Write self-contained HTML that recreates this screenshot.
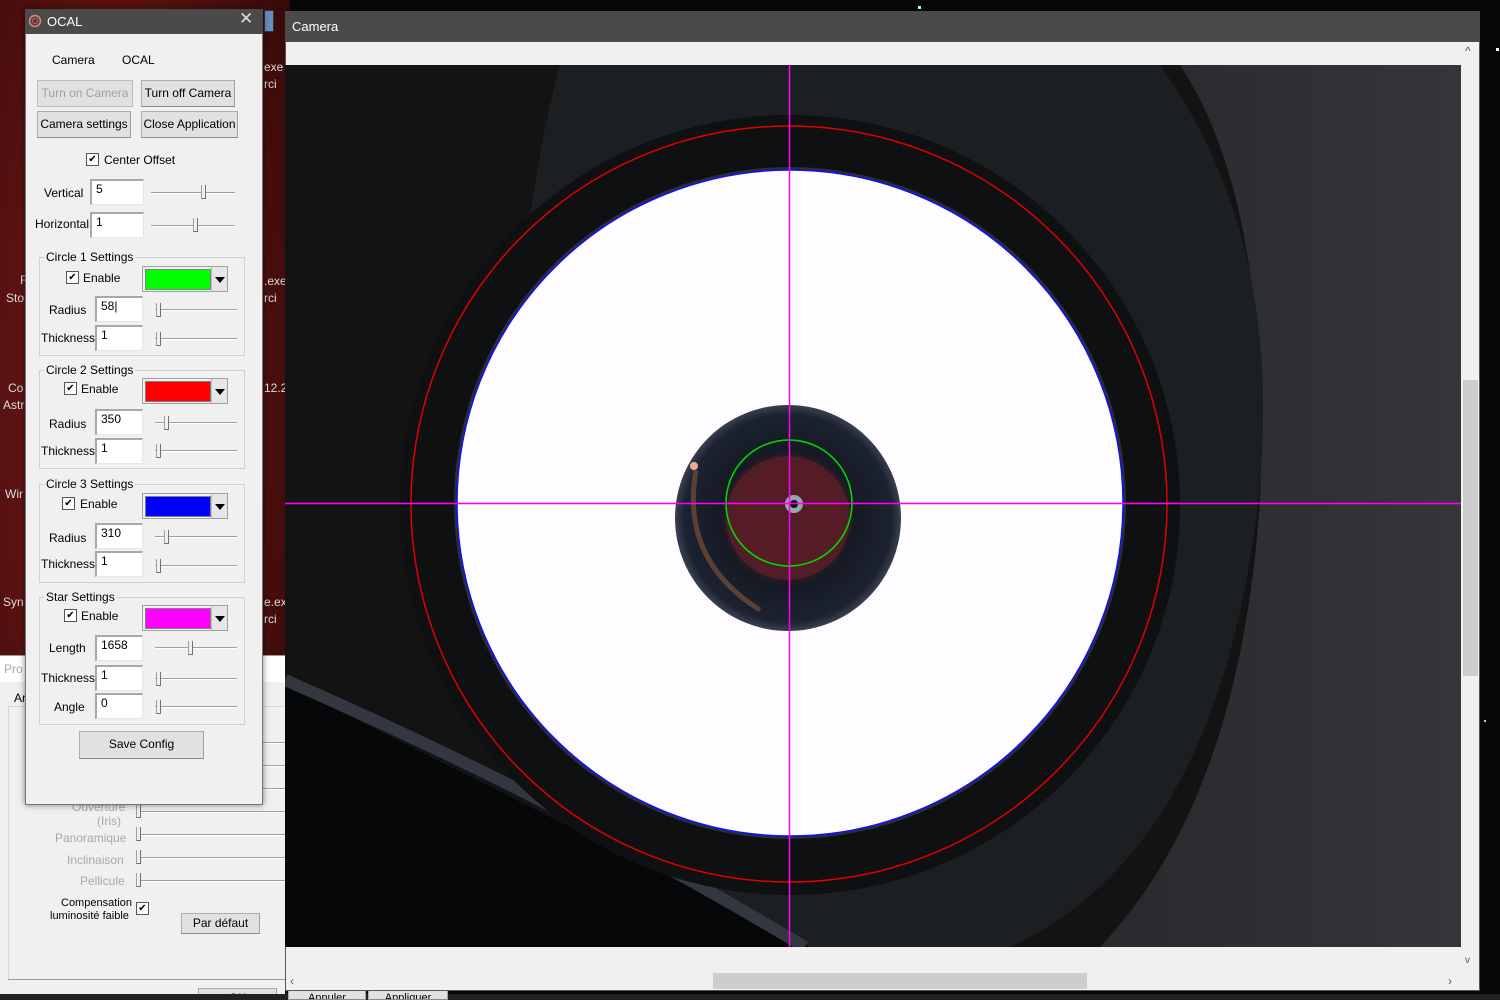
<!DOCTYPE html>
<html><head><meta charset="utf-8">
<style>
*{box-sizing:border-box;margin:0;padding:0}
html,body{width:1500px;height:1000px;overflow:hidden}
body{position:relative;background:#050608;font-family:"Liberation Sans",sans-serif;font-size:12px;color:#000}
.a{position:absolute}
.lbl{position:absolute;font-size:12px;line-height:14px;white-space:nowrap}
.btn{position:absolute;background:#e1e1e1;border:1px solid #adadad;border-right-color:#a0a0a0;border-bottom-color:#8a8a8a;text-align:center;line-height:24px;font-size:12px;white-space:nowrap;overflow:hidden}
.inp{position:absolute;background:#fff;border-top:2px solid #a8a8a8;border-left:2px solid #a8a8a8;border-right:1px solid #e6e6e6;border-bottom:1px solid #e6e6e6;padding:1px 0 0 4px;font-size:12px;line-height:14px}
.cb{position:absolute;width:13px;height:13px;background:#fff;border:1px solid #555;font-size:10px;line-height:11px;text-align:center}
.trk{position:absolute;height:2px;border-top:1px solid #a0a0a0;border-bottom:1px solid #fff}
.thm{position:absolute;width:5px;height:14px;background:#f0f0f0;border:1px solid #a0a0a0;border-right-color:#707070;border-bottom-color:#707070;border-top:none}
.grp{position:absolute;border:1px solid #d0d0d0;left:39px;width:206px}
.gt{position:absolute;background:#f0f0f0;padding:0 2px;left:4px;top:-8px;font-size:12px;line-height:14px}
.combo{position:absolute;left:142px;width:86px;height:26px;border:1px solid #a0a0a0;background:#f0f0f0}
.sw{position:absolute;left:2px;top:2px;width:66px;height:21px;border:1px solid #808080}
.arr{position:absolute;right:0;top:0;width:16px;height:24px;background:#e6e6e6;border-left:1px solid #c0c0c0}
.arr:after{content:"";position:absolute;left:3px;top:10px;border-left:5px solid transparent;border-right:5px solid transparent;border-top:6px solid #000}
.gray{color:#a8a8a8}
</style></head><body>

<div class="a" style="left:0;top:0;width:290px;height:1000px;background:radial-gradient(ellipse at 40% 40%,#7a1a1a 0%,#5a1212 45%,#3a0a0a 80%,#200505 100%)"></div>
<div class="a" style="left:264px;top:10px;width:10px;height:22px;background:#6a8cbf;border:1px solid #333"></div>
<div class="lbl" style="left:264px;top:60px;color:#ddd">exe</div>
<div class="lbl" style="left:264px;top:77px;color:#ddd">rci</div>
<div class="lbl" style="left:264px;top:274px;color:#ddd">.exe</div>
<div class="lbl" style="left:264px;top:291px;color:#ddd">rci</div>
<div class="lbl" style="left:264px;top:381px;color:#ddd">12.2</div>
<div class="lbl" style="left:264px;top:595px;color:#ddd">e.exe</div>
<div class="lbl" style="left:264px;top:612px;color:#ddd">rci</div>
<div class="lbl" style="left:20px;top:273px;color:#ddd">F</div>
<div class="lbl" style="left:6px;top:291px;color:#ddd">Sto</div>
<div class="lbl" style="left:8px;top:381px;color:#ddd">Co</div>
<div class="lbl" style="left:3px;top:398px;color:#ddd">Astr</div>
<div class="lbl" style="left:5px;top:487px;color:#ddd">Wir</div>
<div class="lbl" style="left:3px;top:595px;color:#ddd">Syn</div>

<div class="a" style="left:0;top:655px;width:285px;height:345px;background:#f0f0f0;border-top:1px solid #999"></div>
<div class="a" style="left:0;top:656px;width:285px;height:26px;background:#fff"></div>
<div class="lbl gray" style="left:4px;top:662px">Pro</div>
<div class="lbl" style="left:14px;top:691px">Ar</div>
<div class="a" style="left:8px;top:706px;width:280px;height:274px;border:1px solid #d8d8d8;background:#f0f0f0"></div>
<div class="trk" style="left:263px;top:742px;width:22px"></div>
<div class="trk" style="left:263px;top:765px;width:22px"></div>
<div class="trk" style="left:263px;top:788px;width:22px"></div>
<div class="lbl gray" style="left:72px;top:800px">Ouverture</div>
<div class="lbl gray" style="left:97px;top:814px">(Iris)</div>
<div class="trk" style="left:140px;top:811px;width:145px"></div><div class="thm" style="left:136px;top:804px"></div>
<div class="lbl gray" style="left:55px;top:831px">Panoramique</div>
<div class="trk" style="left:140px;top:834px;width:145px"></div><div class="thm" style="left:136px;top:827px"></div>
<div class="lbl gray" style="left:67px;top:853px">Inclinaison</div>
<div class="trk" style="left:140px;top:857px;width:145px"></div><div class="thm" style="left:136px;top:850px"></div>
<div class="lbl gray" style="left:80px;top:874px">Pellicule</div>
<div class="trk" style="left:140px;top:880px;width:145px"></div><div class="thm" style="left:136px;top:873px"></div>
<div class="lbl" style="left:61px;top:896px;font-size:11px">Compensation</div>
<div class="lbl" style="left:50px;top:909px;font-size:11px">luminosité faible</div>
<div class="cb" style="left:136px;top:902px">✔</div>
<div class="btn" style="left:181px;top:913px;width:79px;height:21px;line-height:19px">Par défaut</div>
<div class="a" style="left:8px;top:979px;width:280px;height:1px;background:#999"></div>
<div class="btn" style="left:198px;top:988px;width:79px;height:12px;line-height:18px">OK</div>
<div class="a" style="left:0;top:994px;width:1500px;height:6px;background:#222"></div>
<div class="btn" style="left:288px;top:990px;width:78px;height:10px;line-height:14px;font-size:11px">Annuler</div>
<div class="btn" style="left:368px;top:990px;width:80px;height:10px;line-height:14px;font-size:11px">Appliquer</div>

<div class="a" style="left:285px;top:11px;width:1195px;height:980px;background:#f0f0f0;border:1px solid #555"></div>
<div class="a" style="left:285px;top:11px;width:1195px;height:31px;background:#4b4a48"></div>
<div class="lbl" style="left:292px;top:20px;color:#fff;font-size:13px">Camera</div>
<svg class="a" style="left:285px;top:65px" width="1176" height="882" viewBox="285 65 1176 882">
<defs>
<linearGradient id="rg" x1="0" y1="0" x2="1" y2="0">
<stop offset="0" stop-color="#27292c"/><stop offset="1" stop-color="#35363a"/>
</linearGradient>
<radialGradient id="dk" cx="0.5" cy="0.5" r="0.5">
<stop offset="0" stop-color="#3a1a22"/><stop offset="0.45" stop-color="#4a1c26"/><stop offset="0.6" stop-color="#151a24"/><stop offset="0.92" stop-color="#1c2230"/><stop offset="1" stop-color="#3a4050"/>
</radialGradient>
</defs>
<rect x="285" y="65" width="1176" height="882" fill="#141313"/>
<path d="M1180 65 L1461 65 L1461 947 L1100 947 Q1240 800 1260 500 Q1270 200 1180 65Z" fill="url(#rg)"/>
<path d="M560 65 L1160 65 Q1300 260 1250 560 Q1200 860 1010 947 L780 947 Q540 820 520 500 Q510 250 560 65Z" fill="#1c1f22"/>
<path d="M285 684 L810 947 L285 947Z" fill="#060708"/>
<path d="M285 680 Q560 800 805 947" stroke="#323740" stroke-width="12" fill="none"/>
<circle cx="790" cy="505" r="390" fill="#0e1012"/>
<circle cx="790" cy="503" r="336" fill="#2a2e33"/>
<circle cx="790" cy="503" r="333" fill="#fefcff"/>
<circle cx="788" cy="518" r="113" fill="url(#dk)"/>
<circle cx="788" cy="518" r="62" fill="#5a1e28" opacity="0.8"/>
<circle cx="794" cy="504" r="9" fill="#9aa4ac"/>
<circle cx="794" cy="504" r="4" fill="#111"/>
<path d="M696 470 Q680 560 760 610" stroke="#6a4a3a" stroke-width="5" fill="none" opacity="0.8"/>
<circle cx="694" cy="466" r="4" fill="#e8b090"/>
<circle cx="790" cy="503" r="333" fill="none" stroke="#1010ff" stroke-width="1.5"/>
<circle cx="789" cy="504" r="378" fill="none" stroke="#e00000" stroke-width="1.5"/>
<circle cx="789" cy="503" r="63" fill="none" stroke="#00dd00" stroke-width="1.5"/>
<line x1="789.5" y1="65" x2="789.5" y2="947" stroke="#ff00ff" stroke-width="1.5"/>
<line x1="285" y1="503.5" x2="1461" y2="503.5" stroke="#ff00ff" stroke-width="1.5"/>
</svg>
<div class="a" style="left:1461px;top:42px;width:18px;height:928px;background:#f0f0f0"></div>
<div class="a" style="left:1463px;top:380px;width:15px;height:296px;background:#cdcdcd"></div>
<div class="lbl" style="left:1465px;top:44px;color:#555;font-size:12px">^</div>
<div class="lbl" style="left:1465px;top:954px;color:#555;font-size:10px">v</div>
<div class="a" style="left:286px;top:971px;width:1175px;height:19px;background:#f0f0f0"></div>
<div class="a" style="left:713px;top:973px;width:374px;height:16px;background:#cdcdcd"></div>
<div class="lbl" style="left:290px;top:974px;color:#555">‹</div>
<div class="lbl" style="left:1448px;top:974px;color:#555">›</div>

<div class="a" style="left:25px;top:9px;width:238px;height:796px;background:#f0f0f0;border:1px solid #777;box-shadow:0 0 6px rgba(0,0,0,0.5)"></div>
<div class="a" style="left:25px;top:9px;width:238px;height:25px;background:#4b4a48"></div>
<svg class="a" style="left:28px;top:14px" width="14" height="14"><circle cx="7" cy="7" r="5.5" fill="none" stroke="#d88" stroke-width="1.5"/><circle cx="7" cy="7" r="2.5" fill="#633" stroke="#b66"/></svg>
<div class="lbl" style="left:47px;top:15px;color:#fff;font-size:13px">OCAL</div>
<div class="lbl" style="left:239px;top:12px;color:#ddd;font-size:17px">✕</div>

<div class="lbl" style="left:52px;top:53px">Camera</div>
<div class="lbl" style="left:122px;top:53px">OCAL</div>
<div class="btn" style="left:37px;top:80px;width:96px;height:27px;color:#a0a0a0;border-color:#bdbdbd">Turn on Camera</div>
<div class="btn" style="left:141px;top:80px;width:94px;height:27px">Turn off Camera</div>
<div class="btn" style="left:37px;top:111px;width:94px;height:27px">Camera settings</div>
<div class="btn" style="left:141px;top:111px;width:97px;height:27px">Close Application</div>
<div class="cb" style="left:86px;top:153px">✔</div>
<div class="lbl" style="left:104px;top:153px">Center Offset</div>
<div class="lbl" style="left:44px;top:186px">Vertical</div>
<div class="inp" style="left:90px;top:179px;width:54px;height:26px">5</div>
<div class="trk" style="left:151px;top:192px;width:84px"></div><div class="thm" style="left:201px;top:185px"></div>
<div class="lbl" style="left:35px;top:217px">Horizontal</div>
<div class="inp" style="left:90px;top:212px;width:54px;height:26px">1</div>
<div class="trk" style="left:151px;top:225px;width:84px"></div><div class="thm" style="left:193px;top:218px"></div>

<div class="grp" style="top:257px;height:99px"><div class="gt">Circle 1 Settings</div></div>
<div class="cb" style="left:66px;top:271px">✔</div><div class="lbl" style="left:83px;top:271px">Enable</div>
<div class="combo" style="top:266px"><div class="sw" style="background:#00ff00"></div><div class="arr"></div></div>
<div class="lbl" style="left:49px;top:303px">Radius</div>
<div class="inp" style="left:95px;top:296px;width:48px;height:26px">58|</div>
<div class="trk" style="left:155px;top:309px;width:82px"></div><div class="thm" style="left:156px;top:303px"></div>
<div class="lbl" style="left:41px;top:331px">Thickness</div>
<div class="inp" style="left:95px;top:325px;width:48px;height:26px">1</div>
<div class="trk" style="left:155px;top:338px;width:82px"></div><div class="thm" style="left:156px;top:332px"></div>

<div class="grp" style="top:370px;height:99px"><div class="gt">Circle 2 Settings</div></div>
<div class="cb" style="left:64px;top:382px">✔</div><div class="lbl" style="left:81px;top:382px">Enable</div>
<div class="combo" style="top:378px"><div class="sw" style="background:#ff0000"></div><div class="arr"></div></div>
<div class="lbl" style="left:49px;top:417px">Radius</div>
<div class="inp" style="left:95px;top:409px;width:48px;height:26px">350</div>
<div class="trk" style="left:155px;top:422px;width:82px"></div><div class="thm" style="left:164px;top:416px"></div>
<div class="lbl" style="left:41px;top:444px">Thickness</div>
<div class="inp" style="left:95px;top:438px;width:48px;height:26px">1</div>
<div class="trk" style="left:155px;top:450px;width:82px"></div><div class="thm" style="left:156px;top:444px"></div>

<div class="grp" style="top:484px;height:99px"><div class="gt">Circle 3 Settings</div></div>
<div class="cb" style="left:62px;top:497px">✔</div><div class="lbl" style="left:80px;top:497px">Enable</div>
<div class="combo" style="top:493px"><div class="sw" style="background:#0000ff"></div><div class="arr"></div></div>
<div class="lbl" style="left:49px;top:531px">Radius</div>
<div class="inp" style="left:95px;top:523px;width:48px;height:26px">310</div>
<div class="trk" style="left:155px;top:536px;width:82px"></div><div class="thm" style="left:164px;top:530px"></div>
<div class="lbl" style="left:41px;top:557px">Thickness</div>
<div class="inp" style="left:95px;top:551px;width:48px;height:26px">1</div>
<div class="trk" style="left:155px;top:565px;width:82px"></div><div class="thm" style="left:156px;top:559px"></div>

<div class="grp" style="top:597px;height:128px"><div class="gt">Star Settings</div></div>
<div class="cb" style="left:64px;top:609px">✔</div><div class="lbl" style="left:81px;top:609px">Enable</div>
<div class="combo" style="top:605px"><div class="sw" style="background:#ff00ff"></div><div class="arr"></div></div>
<div class="lbl" style="left:49px;top:641px">Length</div>
<div class="inp" style="left:95px;top:635px;width:48px;height:26px">1658</div>
<div class="trk" style="left:155px;top:647px;width:82px"></div><div class="thm" style="left:188px;top:641px"></div>
<div class="lbl" style="left:41px;top:671px">Thickness</div>
<div class="inp" style="left:95px;top:665px;width:48px;height:26px">1</div>
<div class="trk" style="left:155px;top:678px;width:82px"></div><div class="thm" style="left:156px;top:672px"></div>
<div class="lbl" style="left:54px;top:700px">Angle</div>
<div class="inp" style="left:95px;top:693px;width:48px;height:26px">0</div>
<div class="trk" style="left:155px;top:706px;width:82px"></div><div class="thm" style="left:156px;top:700px"></div>

<div class="btn" style="left:79px;top:731px;width:125px;height:28px">Save Config</div>

<div class="a" style="left:918px;top:6px;width:3px;height:3px;background:#9ff"></div>
<div class="a" style="left:1496px;top:48px;width:3px;height:3px;background:#fff"></div>
<div class="a" style="left:1484px;top:720px;width:2px;height:2px;background:#ccc"></div>
</body></html>
